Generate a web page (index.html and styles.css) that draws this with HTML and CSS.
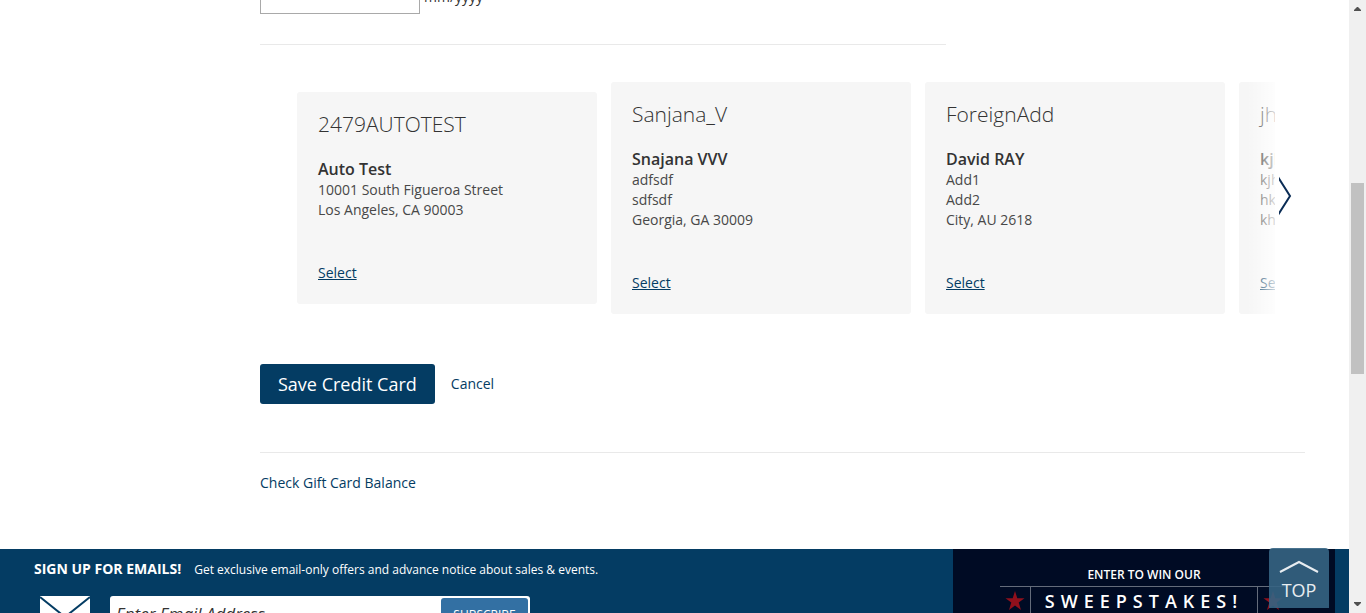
FILE: index.html
```html
<!DOCTYPE html>
<html lang="en">
<head>
<meta charset="utf-8">
<title>Save Credit Card</title>
<link rel="stylesheet" href="styles.css">
</head>
<body>
<div class="window">
  <div class="page">
    <main class="content">
      <form class="form">
        <div class="expiry">
          <input class="expiry-input" id="expiry" type="text">
          <label class="expiry-hint" for="expiry">mm/yyyy</label>
        </div>
        <hr class="rule rule-short">
        <section class="carousel">
          <div class="track">
            <article class="card">
              <h2 class="card-title">2479AUTOTEST</h2>
              <h3 class="card-name">Auto Test</h3>
              <p class="card-address">10001 South Figueroa Street<br>Los Angeles, CA 90003</p>
              <a class="card-select" href="#">Select</a>
            </article>
            <article class="card">
              <h2 class="card-title">Sanjana_V</h2>
              <h3 class="card-name">Snajana VVV</h3>
              <p class="card-address">adfsdf<br>sdfsdf<br>Georgia, GA 30009</p>
              <a class="card-select" href="#">Select</a>
            </article>
            <article class="card">
              <h2 class="card-title">ForeignAdd</h2>
              <h3 class="card-name">David RAY</h3>
              <p class="card-address">Add1<br>Add2<br>City, AU 2618</p>
              <a class="card-select" href="#">Select</a>
            </article>
            <article class="card">
              <h2 class="card-title">jh</h2>
              <h3 class="card-name">kjh</h3>
              <p class="card-address">kjh<br>hk<br>kh</p>
              <a class="card-select" href="#">Select</a>
            </article>
          </div>
          <button class="next" type="button" aria-label="Next">
            <svg width="14" height="40" viewBox="0 0 14 40"><path d="M-1 1L11 20L-1 39" fill="none" stroke="#0a2c55" stroke-width="2"/></svg>
          </button>
        </section>
        <div class="actions">
          <button class="save" type="submit">Save Credit Card</button>
          <a class="link" href="#">Cancel</a>
        </div>
      </form>
      <hr class="rule">
      <a class="link" href="#">Check Gift Card Balance</a>
    </main>
    <footer class="footer">
      <form class="signup">
        <p class="signup-head"><strong class="signup-title">SIGN UP FOR EMAILS!</strong><span>Get exclusive email-only offers and advance notice about sales &amp; events.</span></p>
        <div class="signup-row">
          <svg class="mail" width="50" height="36" viewBox="0 0 50 36"><path fill="#fff" d="M0 0H50V36H0Z"/><path d="M0 1L25 21L50 1" fill="none" stroke="#043c63" stroke-width="2"/></svg>
          <div class="signup-box">
            <input class="signup-input" type="email" placeholder="Enter Email Address" aria-label="Enter Email Address">
            <button class="subscribe" type="submit">SUBSCRIBE</button>
          </div>
        </div>
      </form>
      <section class="sweeps">
        <p class="sweeps-lead">ENTER TO WIN OUR</p>
        <div class="sweeps-row">
          <span class="sweeps-star"><svg width="20" height="20" viewBox="0 0 20 20"><path fill="#90101c" d="M10 0L12.3 7.2H19.5L13.7 11.6L16 19L10 14.5L4 19L6.3 11.6L.5 7.2H7.7Z"/></svg></span>
          <span class="sweeps-word">SWEEPSTAKES!</span>
          <span class="sweeps-star"><svg width="20" height="20" viewBox="0 0 20 20"><path fill="#90101c" d="M10 0L12.3 7.2H19.5L13.7 11.6L16 19L10 14.5L4 19L6.3 11.6L.5 7.2H7.7Z"/></svg></span>
        </div>
      </section>
    </footer>
    <a class="top" href="#">
      <svg width="40" height="14" viewBox="0 0 40 14"><path d="M1 12L20 2L39 12" fill="none" stroke="#e8edf1" stroke-width="2"/></svg>
      <span>TOP</span>
    </a>
  </div>
  <div class="scrollbar">
    <svg class="arrow" width="17" height="17" viewBox="0 0 17 17"><path fill="#505050" d="M5 11H12V10L9 7H8L5 10Z"/></svg>
    <div class="gutter"><div class="thumb"></div></div>
    <svg class="arrow" width="17" height="17" viewBox="0 0 17 17"><path fill="#505050" d="M5 6H12V7L9 10H8L5 7Z"/></svg>
  </div>
</div>
</body>
</html>
```
FILE: styles.css
```css
* { box-sizing: border-box; }
body {
  margin: 0;
  background: #fff;
  color: #333;
  font: 400 14px/20px "Open Sans", "Noto Sans", sans-serif;
}
h2, h3, p { margin: 0; }
button, input { font-family: inherit; }

.window { display: flex; height: 100vh; overflow: hidden; }
.page { position: relative; flex: 1; min-width: 0; overflow: hidden; }
.content { padding: 0 44px 56px 260px; }

/* The window is scrolled part way past the expiry field. */
.expiry { display: flex; align-items: center; gap: 4px; margin-top: -26px; }
.expiry-input { width: 160px; height: 40px; border: 1px solid #a9a9a9; background: #fff; }
.expiry-hint { padding-top: 6px; }

.rule { height: 1px; margin: 48px 0 20px; border: 0; background: #e9e9e9; }
.rule-short { width: 686px; max-width: 100%; margin: 30px 0 37px; }

.carousel { display: flex; align-items: center; padding-left: 37px; }
.track { position: relative; display: flex; flex: 1; min-width: 0; align-items: center; gap: 14px; overflow: hidden; }
.track::after {
  content: "";
  position: absolute;
  inset: 0 0 0 auto;
  width: 28px;
  background: linear-gradient(to right, rgba(255,255,255,0), rgba(255,255,255,.8));
}
.card { flex: 0 0 300px; padding: 20px 21px 21px; border-radius: 3px; background: #f6f6f6; }
.card-title { margin-bottom: 23px; font-size: 21px; line-height: 24px; font-weight: 300; }
.card-name { margin-bottom: 1px; font-size: 16px; line-height: 20px; font-weight: 600; }
.card-address { margin-bottom: 43px; color: #484848; }
.card-select { display: block; color: #043c63; }
.next { flex: 0 0 30px; height: 40px; margin-bottom: 4px; padding: 0 0 0 4px; border: 0; background: none; text-align: left; }
.next svg { display: block; }

.actions { display: flex; align-items: center; gap: 16px; margin-top: 50px; }
.save {
  height: 40px;
  padding: 0 18px;
  border: 0;
  border-radius: 3px;
  background: #043c63;
  color: #fff;
  font-size: 18px;
}
.link { display: inline-block; color: #043c63; text-decoration: none; }

.footer { display: flex; justify-content: space-between; padding-right: 14px; background: #043c63; color: #fff; }
.signup { padding: 10px 0 0 34px; }
.signup-head { display: flex; align-items: baseline; gap: 13px; font-size: 12px; }
.signup-title { font-size: 14px; font-weight: 700; }
.signup-row { display: flex; align-items: flex-start; gap: 20px; margin: 16px 0 20px 6px; }
.signup-box { display: flex; width: 420px; padding: 2px; border-radius: 3px; background: #fff; }
.signup-input { flex: 1; min-width: 0; padding: 0 4px 1px; border: 0; background: none; font-size: 17px; font-style: italic; }
.signup-input::placeholder { color: #333; }
.subscribe { width: 87px; height: 32px; border: 0; border-radius: 3px; background: #3370a3; color: #fff; font-size: 12px; }

.sweeps { width: 382px; padding: 16px 47px 0; background: #000b24; text-align: center; }
.sweeps-lead { margin-bottom: 1px; font-size: 12px; font-weight: 600; }
.sweeps-row { display: flex; border-top: 1px solid #646c7b; }
.sweeps-star { display: flex; flex: 0 0 30px; justify-content: center; padding-top: 4px; }
.sweeps-word {
  flex: 1;
  border: solid #646c7b;
  border-width: 0 1px;
  font-size: 18px;
  line-height: 28px;
  font-weight: 600;
  letter-spacing: 6px;
  white-space: nowrap;
}

.top {
  position: absolute;
  right: 20px;
  bottom: 5px;
  display: flex;
  flex-direction: column;
  align-items: center;
  gap: 6px;
  width: 60px;
  height: 60px;
  padding-top: 12px;
  border-radius: 4px 4px 0 0;
  background: rgba(53,100,131,.9);
  color: #e8edf1;
  font-size: 18px;
  text-decoration: none;
}

.scrollbar { display: flex; flex: 0 0 17px; flex-direction: column; background: #f0f0f0; }
.arrow { display: block; flex: none; }
.gutter { display: grid; flex: 1; grid-template-rows: 166fr 191fr 222fr; padding: 0 2px; }
.thumb { grid-row: 2; background: #c1c1c1; }
```
